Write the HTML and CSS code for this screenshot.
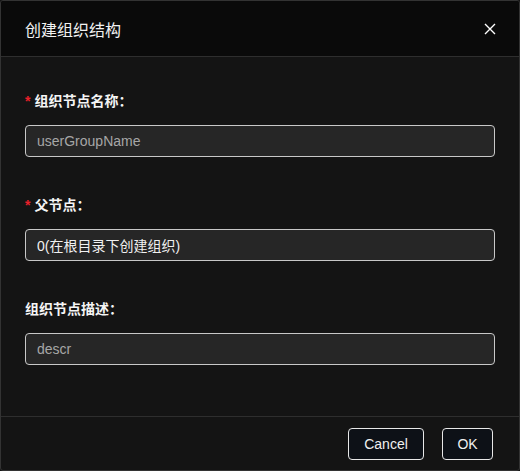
FILE: index.html
```html
<!DOCTYPE html>
<html lang="zh-CN">
<head>
<meta charset="UTF-8" />
<meta name="viewport" content="width=device-width, initial-scale=1" />
<title>创建组织结构</title>
<link rel="stylesheet" href="styles.css">
</head>
<body>

<div class="dialog">
  <div class="dialog-header">
    <span class="dialog-title">创建组织结构</span>
    <button class="close-btn" aria-label="close">
      <svg width="12" height="12" viewBox="0 0 12 12"><path d="M1 1L11 11M11 1L1 11" stroke="#fff" stroke-width="1.4" fill="none"/></svg>
    </button>
  </div>

  <div class="dialog-body">
    <div class="field">
      <label class="field-label"><span class="req">*</span>组织节点名称：</label>
      <input class="field-input muted" type="text" value="userGroupName" />
    </div>
    <div class="field">
      <label class="field-label"><span class="req">*</span>父节点：</label>
      <input class="field-input" type="text" value="0(在根目录下创建组织)" />
    </div>
    <div class="field">
      <label class="field-label">组织节点描述：</label>
      <input class="field-input muted" type="text" value="descr" />
    </div>
  </div>

  <div class="dialog-footer">
    <button class="btn btn-cancel">Cancel</button>
    <button class="btn btn-ok">OK</button>
  </div>
</div>

</body>
</html>
```

FILE: styles.css
```css
html, body {
  margin: 0;
  padding: 0;
  background: #141414;
}
body {
  font-family: 'Liberation Sans', 'Noto Sans CJK SC', sans-serif;
  color: #fff;
}
.dialog {
  width: 520px;
  height: 471px;
  box-sizing: border-box;
  border: 1px solid #333;
  border-radius: 3px;
  background: #141414;
  display: flex;
  flex-direction: column;
  overflow: hidden;
}
.dialog-header {
  height: 55px;
  background: #0a0a0a;
  border-bottom: 1px solid #2e2e2e;
  display: flex;
  align-items: center;
  justify-content: space-between;
  padding: 0 23px 0 24px;
  flex-shrink: 0;
}
.dialog-title {
  font-size: 16px;
  color: #f2f2f2;
  margin-top: 1px;
}
.close-btn {
  background: transparent;
  border: none;
  padding: 0;
  width: 12px;
  height: 12px;
  display: flex;
  cursor: pointer;
  margin-top: 1px;
}
.dialog-body {
  height: 360px;
  padding: 33px 24px 0 24px;
  box-sizing: border-box;
  border-bottom: 1px solid #2e2e2e;
  flex-shrink: 0;
}
.field {
  margin-bottom: 37px;
}
.field-label {
  display: block;
  font-size: 14px;
  font-weight: bold;
  line-height: 22px;
  color: #f5f5f5;
  margin-bottom: 13px;
}
.req {
  color: #e8202a;
  margin-right: 4px;
  font-family: 'Liberation Sans', sans-serif;
}
.field-input {
  display: block;
  width: 100%;
  height: 32px;
  box-sizing: border-box;
  background: #262626;
  border: 1px solid #c8c8c8;
  border-radius: 4px;
  padding: 0 11px;
  font-family: 'Liberation Sans', 'Noto Sans CJK SC', sans-serif;
  font-size: 14px;
  color: #f0f0f0;
  outline: none;
}
.field-input.muted {
  color: #a6a6a6;
}
.dialog-footer {
  flex: 1;
  display: flex;
  justify-content: flex-end;
  align-items: flex-start;
  gap: 18px;
  padding: 11px 26px 0 0;
}
.btn {
  height: 32px;
  background: #0d1117;
  color: #f0f0f0;
  border: 1px solid #e8e8e8;
  border-radius: 4px;
  font-family: 'Liberation Sans', sans-serif;
  font-size: 14px;
  cursor: pointer;
}
.btn-cancel {
  width: 76px;
}
.btn-ok {
  width: 51px;
}
```
